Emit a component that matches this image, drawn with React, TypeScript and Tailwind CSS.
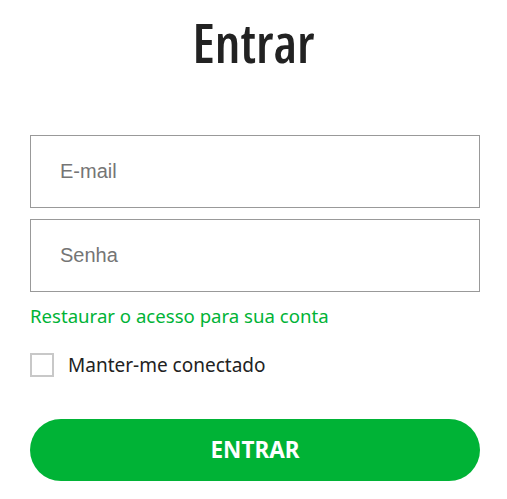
import React from "react";

export default function App() {
  return (
    <div className="w-[507px] h-[499px] bg-white overflow-hidden font-['Noto_Sans','Open_Sans',sans-serif]">
      <div className="px-[30px] pt-[13px] flex flex-col">
        <h1 className="text-center text-[54px] leading-[58px] font-semibold text-[#222222] font-['Open_Sans','Noto_Sans',sans-serif] font-stretch-semi-condensed">
          Entrar
        </h1>
        <div className="mt-[64px] flex flex-col gap-[11px]">
          <input
            type="text"
            autoFocus
            placeholder="E-mail"
            className="w-[450px] h-[73px] border border-[#999999] px-[29px] text-[20px] text-[#222] placeholder:text-[#757575] outline-none caret-[#222] font-['Liberation_Sans',Arial,sans-serif]"
          />
          <input
            type="password"
            placeholder="Senha"
            className="w-[450px] h-[73px] border border-[#999999] px-[29px] text-[20px] text-[#222] placeholder:text-[#757575] outline-none font-['Liberation_Sans',Arial,sans-serif]"
          />
        </div>
        <a className="mt-[12px] text-[18.6px] leading-[24px] text-[#00b336]">Restaurar o acesso para sua conta</a>
        <label className="mt-[25px] flex items-center gap-[14px]">
          <span className="w-[24px] h-[24px] border-2 border-[#c8c8c8] bg-white" />
          <span className="text-[19px] leading-[24px] text-[#222222]">Manter-me conectado</span>
        </label>
        <button className="mt-[42px] w-[450px] h-[62px] rounded-full bg-[#00b336] text-white text-[22.5px] font-bold font-['Noto_Sans','Open_Sans',sans-serif]">
          ENTRAR
        </button>
      </div>
    </div>
  );
}
